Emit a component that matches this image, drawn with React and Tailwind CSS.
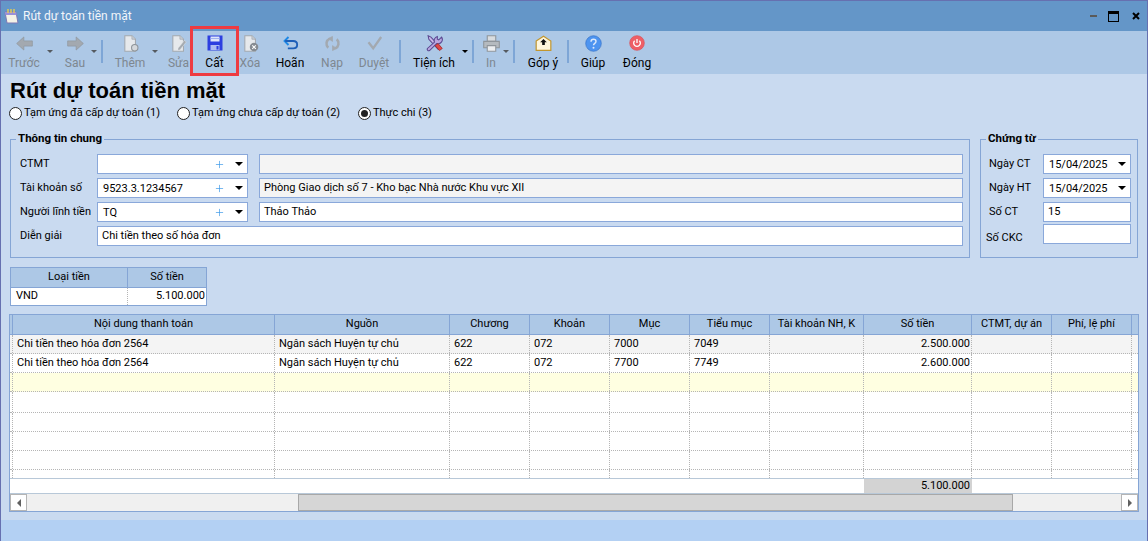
import { Plus } from "lucide-react";

// Windows-forms style "Rút dự toán tiền mặt" voucher window. Toolbar icons are
// drawn inline, the grid is a flex of fixed-width columns.

const GRAY = "#a3a9b0";

const IconBack = () => (
  <svg width="17" height="15" viewBox="0 0 26 22"><path d="M1 11l11-10v6h13v8H12v6z" fill={GRAY} stroke="#8d9399" /></svg>
);
const IconNext = () => (
  <svg width="17" height="15" viewBox="0 0 26 22"><path d="M25 11L14 1v6H1v8h13v6z" fill={GRAY} stroke="#8d9399" /></svg>
);
const Doc = ({ children }) => (
  <svg width="17" height="17" viewBox="0 0 24 24">
    <path d="M4 1h10l5 5v17H4z" fill="#e6e9ec" stroke={GRAY} strokeWidth="1.5" />
    <path d="M14 1v5h5" fill="#c9cdd2" stroke={GRAY} strokeWidth="1" />
    {children}
  </svg>
);
const IconAdd = () => <Doc><circle cx="18" cy="18" r="4.500" fill="#d4d8dc" stroke="#8d9399" strokeWidth="1.500" /></Doc>;
const IconEdit = () => <Doc><path d="M23 10l-9 11-3 1 .5-3.500 9-11z" fill="#a5abb1" stroke="#eef0f2" strokeWidth=".6" /></Doc>;
const IconDel = () => (
  <Doc>
    <circle cx="17" cy="17" r="6" fill="#868c92" />
    <path d="M14.500 14.500l5 5m0-5l-5 5" stroke="#fff" strokeWidth="1.500" />
  </Doc>
);
const IconSave = () => (
  <svg width="16" height="16" viewBox="0 0 16 16">
    <path d="M0.500 0.500h15v15h-15z" fill="#2d3fe0" />
    <path d="M3.500 1.500h9v5h-9z" fill="#dfe6fb" />
    <path d="M3.500 3.500h9" stroke="#9fb0ee" />
    <path d="M3.500 10h9v5h-9z" fill="#aebcf2" />
    <path d="M9.500 11h2v3.500h-2z" fill="#2d3fe0" />
  </svg>
);
const IconUndo = () => (
  <svg width="17" height="16" viewBox="0 0 24 24" fill="none">
    <path d="M9 3L3 9l6 6" stroke="#1e88e5" strokeWidth="2.800" />
    <path d="M4 9h12c3.500 0 6 2 6 5.500s-2.500 5.500-6 5.500H8" stroke="#1e5fb8" strokeWidth="2.800" />
  </svg>
);
const IconReload = () => (
  <svg width="17" height="17" viewBox="0 0 24 24" fill="none" stroke={GRAY} strokeWidth="3.500">
    <path d="M6 18A8 8 0 0 1 8 5" />
    <path d="M18 6a8 8 0 0 1-2 13" />
    <path d="M12 2v7L6 5zM12 22v-7l6 4z" fill={GRAY} strokeWidth="1" />
  </svg>
);
const IconCheck = () => (
  <svg width="17" height="16" viewBox="0 0 24 24" fill="none"><path d="M3 11l7 9L22 3" stroke={GRAY} strokeWidth="3.500" /></svg>
);
const IconTools = () => (
  <svg width="17" height="17" viewBox="0 0 24 24">
    <path d="M3 1l4 2 13 14-3 3L4 6z" fill="#c9b8e8" stroke="#5c4a92" strokeWidth="1.500" />
    <path d="M22 3l-4 4-2-1V2a6 6 0 0 0-4 8L2 19c-1 2 1 4 3 3l10-10a6 6 0 0 0 7-9z" fill="#b9a6e0" stroke="#5c4a92" strokeWidth="1.500" />
    <path d="M13 15l6 7 4-3-6-7z" fill="#e04848" stroke="#a02020" strokeWidth="1" />
  </svg>
);
const IconPrint = () => (
  <svg width="17" height="17" viewBox="0 0 24 24">
    <path d="M6 1h12v8H6z" fill="#d9dcdf" stroke="#8f959b" strokeWidth="1.500" />
    <path d="M1 9h22v9H1z" fill="#b5babf" stroke="#8f959b" strokeWidth="1.500" />
    <path d="M6 15h12v8H6z" fill="#eceef0" stroke="#8f959b" strokeWidth="1.500" />
  </svg>
);
const IconMail = () => (
  <svg width="17" height="16" viewBox="0 0 24 24">
    <path d="M1 9l11-7 11 7v14H1z" fill="#fff6dc" stroke="#c2962e" strokeWidth="1.800" />
    <path d="M12 6l5 5h-3v4h-4v-4H7z" fill="#111" />
  </svg>
);
const IconHelp = () => (
  <svg width="17" height="17" viewBox="0 0 24 24">
    <circle cx="12" cy="12" r="11" fill="#4d94f0" stroke="#3a74c8" />
    <path d="M8.500 9.500C8.500 7 10 6 12 6s3.500 1 3.500 3c0 2.800-3.500 2.800-3.500 5.500" fill="none" stroke="#dce9fb" strokeWidth="2" />
    <circle cx="12" cy="18" r="1.400" fill="#dce9fb" />
  </svg>
);
const IconPower = () => (
  <svg width="16" height="16" viewBox="0 0 24 24" fill="none">
    <circle cx="12" cy="12" r="11" fill="#ee5f66" stroke="#d8525a" />
    <path d="M8.500 8.500a5 5 0 1 0 7 0" stroke="#fff" strokeWidth="2" />
    <path d="M12 6v6" stroke="#fff" strokeWidth="2" />
  </svg>
);

const Caret = ({ w, muted, className = "" }) => (
  <div className={`flex justify-center shrink-0 pt-[15px] ${w} ${className}`}>
    <span className={`w-0 h-0 border-x-[3px] border-x-transparent border-t-[3px] ${muted ? "border-t-[#555a60]" : "border-t-black"}`} />
  </div>
);
const Sep = ({ className }) => <span className={`w-[2px] h-[23px] mt-[5px] bg-[#7ea6d6] shrink-0 ${className}`} />;

const ToolBtn = ({ icon, label, w, off, className = "" }) => (
  <div className={`flex flex-col items-center shrink-0 ${w} ${className}`}>
    <div className="h-[16px] flex items-center justify-center">{icon}</div>
    <span className={`text-[12px] leading-[16px] mt-[4px] whitespace-nowrap ${off ? "text-[#7e8790]" : "text-black"}`}>{label}</span>
  </div>
);

const Toolbar = () => (
  <div className="h-[43px] bg-[#adc8e6] flex items-start pt-[4px] pl-[5px] shrink-0">
    <ToolBtn icon={<IconBack />} label="Trước" w="w-[36px]" off />
    <Caret w="w-[16px]" muted />
    <ToolBtn icon={<IconNext />} label="Sau" w="w-[26px]" off className="ml-[4px]" />
    <Caret w="w-[12px]" muted />
    <Sep className="ml-[1px] mr-[9px]" />
    <ToolBtn icon={<IconAdd />} label="Thêm" w="w-[36px]" off />
    <Caret w="w-[14px]" muted />
    <ToolBtn icon={<IconEdit />} label="Sửa" w="w-[23px]" off className="ml-[5px]" />
    <div className="relative shrink-0">
      <ToolBtn icon={<IconSave />} label="Cất" w="w-[49px]" />
      {/* red highlight frame lying over the button */}
      <span className="absolute left-0 top-[-9px] w-[49px] h-[50px] border-[3px] border-[#ee3b41]" />
    </div>
    <ToolBtn icon={<IconDel />} label="Xóa" w="w-[22px]" off />
    <ToolBtn icon={<IconUndo />} label="Hoãn" w="w-[40px]" className="ml-[9px]" />
    <ToolBtn icon={<IconReload />} label="Nạp" w="w-[26px]" off className="ml-[9px]" />
    <ToolBtn icon={<IconCheck />} label="Duyệt" w="w-[34px]" off className="ml-[12px]" />
    <Sep className="ml-[8px] mr-[11px]" />
    <ToolBtn icon={<IconTools />} label="Tiện ích" w="w-[44px]" />
    <Caret w="w-[10px]" className="ml-[4px]" />
    <Sep className="ml-[2px] mr-[6px]" />
    <ToolBtn icon={<IconPrint />} label="In" w="w-[22px]" off />
    <Caret w="w-[8px]" muted />
    <Sep className="ml-[3px] mr-[12px]" />
    <ToolBtn icon={<IconMail />} label="Góp ý" w="w-[32px]" />
    <Sep className="ml-[8px] mr-[11px]" />
    <ToolBtn icon={<IconHelp />} label="Giúp" w="w-[26px]" />
    <ToolBtn icon={<IconPower />} label="Đóng" w="w-[30px]" className="ml-[16px]" />
  </div>
);

const Radio = ({ label, checked, className = "" }) => (
  <div className={`flex items-center ${className}`}>
    <span className="w-[13px] h-[13px] rounded-full border border-[#222] bg-white flex items-center justify-center shrink-0">
      {checked && <span className="w-[7px] h-[7px] rounded-full bg-[#222]" />}
    </span>
    <span className="ml-[2px] whitespace-nowrap">{label}</span>
  </div>
);

const Combo = ({ value, plus = true }) => (
  <div className="h-[20px] bg-white border border-[#8aa8da] flex items-center pl-[5px] w-full">
    <span className="flex-1 leading-none">{value}</span>
    {plus && <Plus size={11} strokeWidth={1.5} className="text-[#3b97e8] mr-[10px]" />}
    <span className="w-0 h-0 border-x-[4px] border-x-transparent border-t-[4px] border-t-black mr-[4px]" />
  </div>
);

const Input = ({ value, gray, className = "" }) => (
  <div className={`h-[20px] border border-[#8aa8da] flex items-center px-[4px] ${gray ? "bg-[#f4f4f4]" : "bg-white"} ${className}`}>
    {value}
  </div>
);

const Group = ({ title, className, children }) => (
  <div className={`relative border border-[#85a5d5] h-[119px] shrink-0 ${className}`}>
    <span className="absolute left-[5px] top-[-9px] bg-[#c9daf0] px-[2px] text-[11.5px] leading-[14px] font-bold whitespace-nowrap">{title}</span>
    {children}
  </div>
);

const GeneralRow = ({ label, value, text, gray }) => (
  <div className="flex items-center h-[20px]">
    <span className="w-[86px] pl-[9px] shrink-0 whitespace-nowrap">{label}</span>
    <div className="w-[151px] shrink-0"><Combo value={value} /></div>
    <Input value={text} gray={gray} className="ml-[11px] w-[704px]" />
  </div>
);

const COLS = [
  { w: "w-[262px]", title: "Nội dung thanh toán" },
  { w: "w-[175px]", title: "Nguồn" },
  { w: "w-[80px]", title: "Chương" },
  { w: "w-[80px]", title: "Khoản" },
  { w: "w-[80px]", title: "Mục" },
  { w: "w-[80px]", title: "Tiểu mục" },
  { w: "w-[94px]", title: "Tài khoản NH, K" },
  { w: "w-[108px]", title: "Số tiền", right: true },
  { w: "w-[80px]", title: "CTMT, dự án" },
  { w: "w-[80px]", title: "Phí, lệ phí" },
];

const ROWS = [
  { h: "h-[19px]", bg: "bg-[#f4f4f4]", cells: ["Chi tiền theo hóa đơn 2564", "Ngân sách Huyện tự chủ", "622", "072", "7000", "7049", "", "2.500.000", "", ""] },
  { h: "h-[19px]", bg: "bg-white", cells: ["Chi tiền theo hóa đơn 2564", "Ngân sách Huyện tự chủ", "622", "072", "7700", "7749", "", "2.600.000", "", ""] },
  { h: "h-[19px]", bg: "bg-[#ffffe1]", cells: [] },
  { h: "h-[21px]", bg: "bg-white", cells: [] },
  { h: "h-[19px]", bg: "bg-white", cells: [] },
  { h: "h-[19px]", bg: "bg-white", cells: [] },
  { h: "h-[19px]", bg: "bg-white", cells: [] },
  { h: "h-[8px]", bg: "bg-white", cells: [], last: true },
];

const Grid = () => (
  <div className="ml-[8px] mt-[8px] w-[1130px] border border-[#85a5d5] bg-white">
    <div className="flex h-[20px] bg-[#adc8e6] border-b border-[#85a5d5]">
      <div className="w-[3px] border-r border-[#85a5d5] shrink-0" />
      {COLS.map((c) => (
        <div key={c.title} className={`${c.w} shrink-0 border-r border-[#85a5d5] flex items-center justify-center whitespace-nowrap overflow-hidden`}>{c.title}</div>
      ))}
    </div>
    {ROWS.map((r, i) => (
      <div key={i} className={`flex ${r.h} ${r.bg} ${r.last ? "" : "border-b border-dotted border-[#b5b5b5]"}`}>
        <div className="w-[3px] border-r border-dotted border-[#b5b5b5] shrink-0" />
        {COLS.map((c, j) => (
          <div key={c.title} className={`${c.w} shrink-0 border-r border-dotted border-[#b5b5b5] flex items-center whitespace-nowrap overflow-hidden ${c.right ? "justify-end pr-[1px]" : "pl-[4px]"}`}>{r.cells[j]}</div>
        ))}
      </div>
    ))}
    {/* totals row */}
    <div className="flex h-[16px] border-y border-[#b8c8d8]">
      <div className="w-[854px] shrink-0" />
      <div className="w-[108px] shrink-0 bg-[#d3d3d3] flex items-center justify-end pr-[2px]">5.100.000</div>
    </div>
    {/* horizontal scrollbar */}
    <div className="flex h-[17px] bg-[#f0f0f0]">
      <div className="w-[17px] bg-white border border-[#b5b5b5] flex items-center justify-center shrink-0">
        <span className="w-0 h-0 border-y-[4px] border-y-transparent border-r-[4px] border-r-[#606060]" />
      </div>
      <div className="w-[271px] shrink-0" />
      <div className="w-[715px] shrink-0 bg-[#d6d6d6] border border-[#a8a8a8]" />
      <div className="flex-1" />
      <div className="w-[17px] bg-white border border-[#b5b5b5] flex items-center justify-center shrink-0">
        <span className="w-0 h-0 border-y-[4px] border-y-transparent border-l-[4px] border-l-[#606060]" />
      </div>
    </div>
  </div>
);

export default function App() {
  return (
    <div className="w-[1148px] h-[541px] overflow-hidden flex flex-col bg-[#b3d0f3] border-x border-t border-[#6670b0] [font-family:Roboto,sans-serif] text-[11px] text-black">
      {/* title bar */}
      <div className="h-[30px] bg-[#6496c8] flex items-center pl-[3px] shrink-0">
        <svg width="15" height="15" viewBox="0 0 15 15">
          <path d="M1 3h11l2 11H3z" fill="#f4f2e6" stroke="#7d79b5" />
          <path d="M1 3h11l.6 3H1.500z" fill="#9a90d8" />
          <path d="M4 0v4M7 0v4M10 0v4" stroke="#f2d14a" strokeWidth="1.300" />
        </svg>
        <span className="ml-[4px] text-[12px] text-[#f2f5fa]">Rút dự toán tiền mặt</span>
        <div className="ml-auto flex items-center">
          <span className="w-[7px] h-[2px] bg-[#5a5a5a]" />
          <span className="ml-[11px] w-[11px] h-[11px] border border-black border-t-[3px]" />
          <svg className="ml-[13px] mr-[7px]" width="8" height="8" viewBox="0 0 8 8"><path d="M1 1l6 6M7 1L1 7" stroke="#000" strokeWidth="2" /></svg>
        </div>
      </div>
      <Toolbar />
      <div className="h-[446px] bg-[#c9daf0] flex flex-col shrink-0">
        <h1 className="mt-[3px] ml-[9px] text-[22px] leading-[28px] font-bold [font-family:Liberation_Sans,sans-serif]">Rút dự toán tiền mặt</h1>
        <div className="flex items-center h-[16px] ml-[8px]">
          <Radio label="Tạm ứng đã cấp dự toán (1)" className="w-[168px]" />
          <Radio label="Tạm ứng chưa cấp dự toán (2)" className="w-[181px]" />
          <Radio label="Thực chi (3)" checked />
        </div>
        <div className="flex mt-[18px] ml-[9px]">
          <Group title="Thông tin chung" className="w-[960px] pt-[14px]">
            <div className="flex flex-col gap-[4px]">
              <GeneralRow label="CTMT" value="" text="" gray />
              <GeneralRow label="Tài khoản số" value="9523.3.1234567" text="Phòng Giao dịch số 7 - Kho bạc Nhà nước Khu vực XII" gray />
              <GeneralRow label="Người lĩnh tiền" value="TQ" text="Thảo Thảo" />
              <div className="flex items-center h-[20px]">
                <span className="w-[86px] pl-[9px] shrink-0">Diễn giải</span>
                <Input value="Chi tiền theo số hóa đơn" className="w-[866px]" />
              </div>
            </div>
          </Group>
          <Group title="Chứng từ" className="ml-[10px] w-[158px] pt-[14px] pl-[8px]">
            <div className="flex flex-col gap-[4px]">
              {[["Ngày CT", "15/04/2025"], ["Ngày HT", "15/04/2025"]].map(([l, v]) => (
                <div key={l} className="flex items-center h-[20px]">
                  <span className="w-[54px]">{l}</span>
                  <div className="w-[88px]"><Combo value={v} plus={false} /></div>
                </div>
              ))}
              <div className="flex items-center h-[20px]">
                <span className="w-[54px]">Số CT</span>
                <Input value="15" className="w-[88px]" />
              </div>
              <div className="flex items-center h-[20px] -mt-[2px]">
                <span className="w-[54px] -ml-[3px] mr-[3px] mt-[8px]">Số CKC</span>
                <Input value="" className="w-[88px]" />
              </div>
            </div>
          </Group>
        </div>
        {/* currency table */}
        <div className="ml-[9px] mt-[9px] w-[197px] border border-[#85a5d5] bg-white">
          <div className="flex h-[20px] bg-[#adc8e6] border-b border-[#85a5d5]">
            <div className="w-[117px] border-r border-[#85a5d5] flex items-center justify-center">Loại tiền</div>
            <div className="flex-1 flex items-center justify-center">Số tiền</div>
          </div>
          <div className="flex h-[17px]">
            <div className="w-[117px] border-r border-dotted border-[#b5b5b5] flex items-center pl-[5px]">VND</div>
            <div className="flex-1 flex items-center justify-end pr-[1px]">5.100.000</div>
          </div>
        </div>
        <Grid />
      </div>
    </div>
  );
}
